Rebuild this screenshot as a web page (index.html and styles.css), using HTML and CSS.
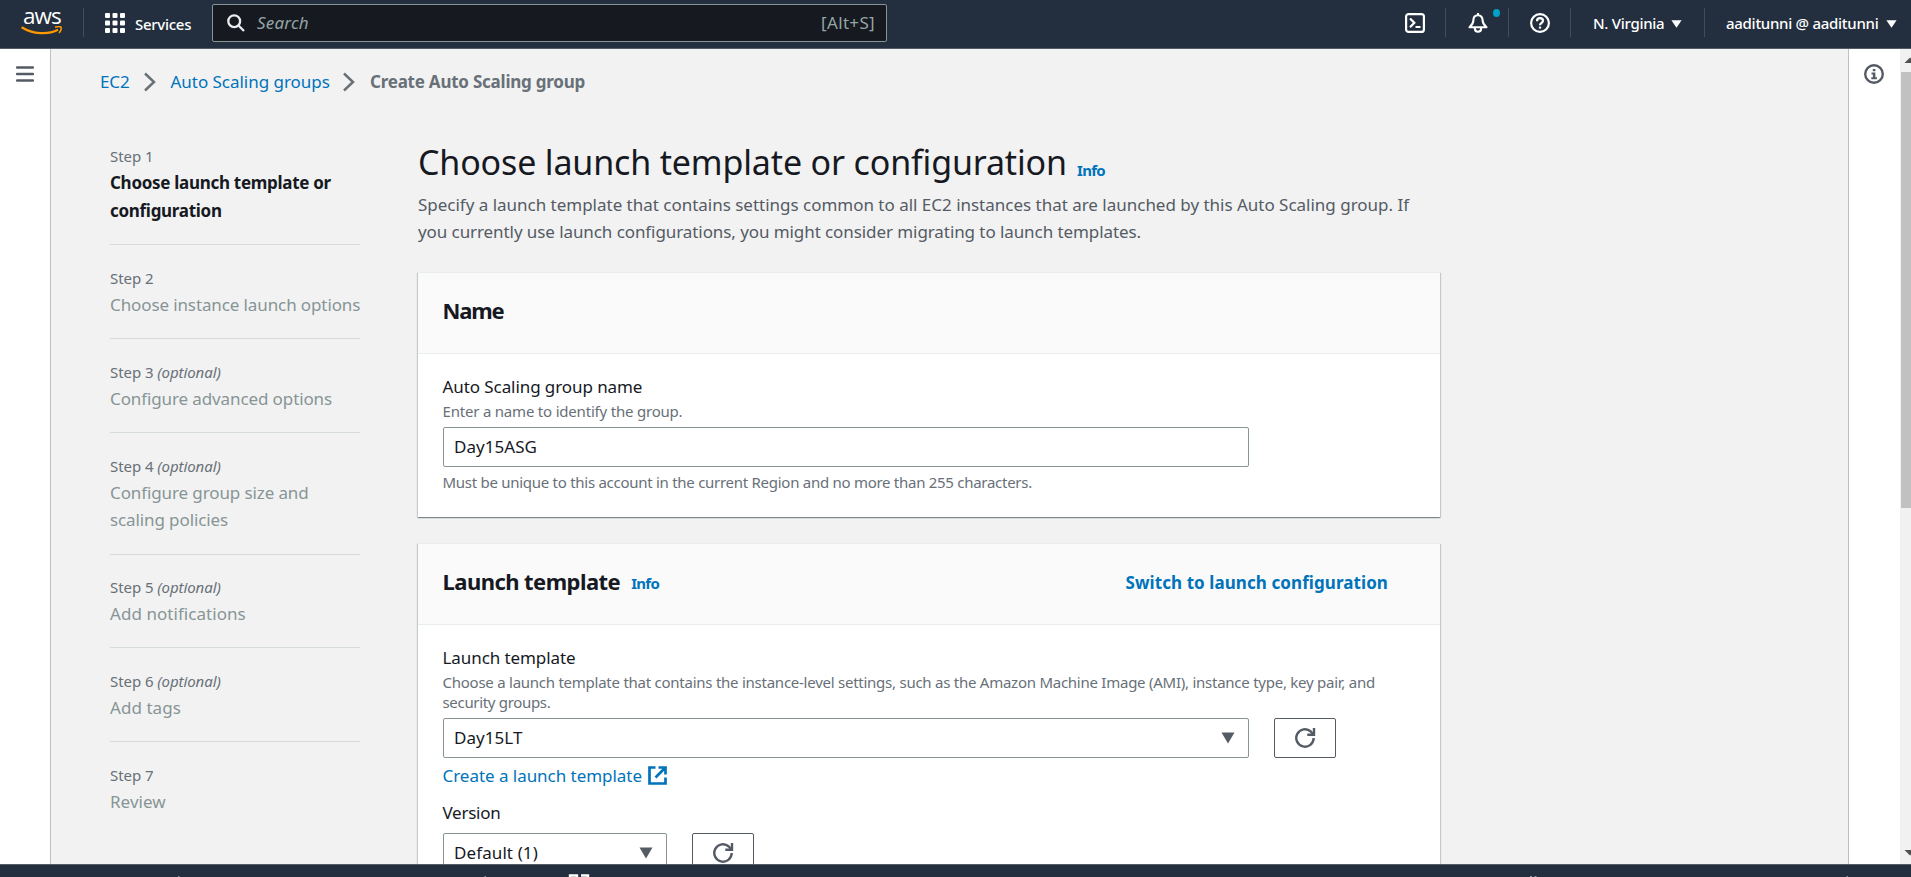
FILE: index.html
```html
<!DOCTYPE html>
<html lang="en">
<head>
<meta charset="utf-8">
<title>Create Auto Scaling group</title>
<link rel="stylesheet" href="styles.css">
</head>
<body>
<div class="app">
  <header class="nav">
    <a class="logo"><span class="logo-text">aws</span>
      <svg class="logo-smile" width="42" height="10" viewBox="0 0 42 10"><path d="M.6 1.2C12 8.300 27 9 37 3.800" fill="none" stroke="#f90" stroke-width="2.300"/><path d="M34 1.300c3-.9 5.500-.7 6 0s.1 3.800-2 5.600" fill="none" stroke="#f90" stroke-width="1.500"/></svg>
    </a>
    <i class="rule rule-logo"></i>
    <div class="services">
      <svg width="20" height="20" viewBox="0 0 20 20" fill="#fff"><rect width="5" height="5" rx="1"/><rect x="7.500" width="5" height="5" rx="1"/><rect x="15" width="5" height="5" rx="1"/><rect y="7.500" width="5" height="5" rx="1"/><rect x="7.500" y="7.500" width="5" height="5" rx="1"/><rect x="15" y="7.500" width="5" height="5" rx="1"/><rect y="15" width="5" height="5" rx="1"/><rect x="7.500" y="15" width="5" height="5" rx="1"/><rect x="15" y="15" width="5" height="5" rx="1"/></svg>
      <span class="nav-text">Services</span>
    </div>
    <div class="search">
      <svg width="18" height="18" viewBox="0 0 18 18" fill="none" stroke="#eaeded" stroke-width="2.300"><circle cx="7.200" cy="7.200" r="5.900"/><path d="M11.500 11.500 17 17"/></svg>
      <span class="search-hint">Search</span>
      <span class="search-key">[Alt+S]</span>
    </div>
    <div class="tools">
      <svg class="tool" width="20" height="20" viewBox="0 0 20 20" fill="none" stroke="#fff" stroke-width="2.200"><rect x="1.100" y="1.100" width="17.800" height="17.800" rx="2.500"/><path d="m5 5.500 4.300 4.300L5 14.200M10.500 14h5"/></svg>
      <i class="rule rule-a"></i>
      <span class="bell">
        <svg width="20" height="20" viewBox="0 0 20 20" fill="none" stroke="#fff" stroke-width="2.100" stroke-linejoin="round"><path d="M10 0v2.500M10 2.300c-3 0-4.600 2.200-4.600 5C5.400 10.500 3.500 12.500 1.500 14.200h17c-2-1.700-3.900-3.700-3.900-6.900 0-2.800-1.600-5-4.600-5z"/><path d="M6.800 14.500v.8c0 2 1.400 3.500 3.200 3.500s3.200-1.500 3.200-3.500v-.8"/></svg>
        <i class="dot"></i>
      </span>
      <i class="rule rule-b"></i>
      <svg class="tool" width="20" height="20" viewBox="0 0 20 20" fill="none" stroke="#fff" stroke-width="2.200"><circle cx="10" cy="10" r="8.900"/><path d="M7 8.200C7 6.200 8.300 5.200 10 5.200s3 1 3 2.600c0 2-3 2-3 4.500"/><path d="M10 13.600v2"/></svg>
      <i class="rule rule-c"></i>
      <span class="nav-text region">N. Virginia</span>
      <svg class="caret-region" width="11" height="8" viewBox="0 0 11 8"><path d="M.4.300h10.200L5.500 7.800z" fill="#fff"/></svg>
      <i class="rule rule-d"></i>
      <span class="nav-text account">aaditunni @ aaditunni</span>
      <svg class="caret-account" width="11" height="8" viewBox="0 0 11 8"><path d="M.4.300h10.200L5.500 7.800z" fill="#fff"/></svg>
    </div>
  </header>

  <div class="body">
    <aside class="rail rail-left">
      <svg width="18" height="16" viewBox="0 0 18 16" fill="none" stroke="#545b64" stroke-width="2.400" stroke-linecap="round"><path d="M1 1.500h16M1 8h16M1 14.500h16"/></svg>
    </aside>

    <div class="page">
      <nav class="crumbs">
        <a class="ec2">EC2</a>
        <svg width="12" height="20" viewBox="0 0 12 20" fill="none" stroke="#687078" stroke-width="2.500"><path d="m1 1.500 9 8.500-9 8.500"/></svg>
        <a class="asg">Auto Scaling groups</a>
        <svg width="12" height="20" viewBox="0 0 12 20" fill="none" stroke="#687078" stroke-width="2.500"><path d="m1 1.500 9 8.500-9 8.500"/></svg>
        <b>Create Auto Scaling group</b>
      </nav>
      <div class="columns">
        <ol class="steps">
          <li class="current"><small>Step 1</small><span>Choose launch template or<br>configuration</span></li>
          <li><small>Step 2</small><span>Choose instance launch options</span></li>
          <li><small>Step 3 <em>(optional)</em></small><span>Configure advanced options</span></li>
          <li><small>Step 4 <em>(optional)</em></small><span>Configure group size and<br>scaling policies</span></li>
          <li><small>Step 5 <em>(optional)</em></small><span class="loose">Add notifications</span></li>
          <li><small>Step 6 <em>(optional)</em></small><span class="loose">Add tags</span></li>
          <li><small>Step 7</small><span class="loose">Review</span></li>
        </ol>
        <main class="main">
          <div class="title"><h1>Choose launch template or configuration</h1><a class="info">Info</a></div>
          <p class="lead">Specify a launch template that contains settings common to all EC2 instances that are launched by this Auto Scaling group. If<br><span class="tight">you currently use launch configurations, you might consider migrating to launch templates.</span></p>

          <section class="card">
            <div class="card-head"><h2 class="name">Name</h2></div>
            <div class="card-body">
              <div class="label">Auto Scaling group name</div>
              <div class="hint enter">Enter a name to identify the group.</div>
              <div class="field wide">Day15ASG</div>
              <div class="hint note">Must be unique to this account in the current Region and no more than 255 characters.</div>
            </div>
          </section>

          <section class="card second">
            <div class="card-head"><h2>Launch template</h2><a class="info">Info</a><a class="switch">Switch to launch configuration</a></div>
            <div class="card-body">
              <div class="label">Launch template</div>
              <div class="hint">Choose a launch template that contains the instance-level settings, such as the Amazon Machine Image (AMI), instance type, key pair, and<br><span class="tighter">security groups.</span></div>
              <div class="row">
                <div class="field wide">Day15LT<svg width="14" height="12" viewBox="0 0 14 12"><path d="M.5.500h13L7 11.500z" fill="#545b64"/></svg></div>
                <div class="button"><svg width="22" height="22" viewBox="0 0 22 22" fill="none" stroke="#545b64" stroke-width="2.400"><path d="M19.700 11a8.700 8.700 0 1 1-2.900-6.500L19 7"/><path d="M20 1v6.800h-6.700"/></svg></div>
              </div>
              <a class="create">Create a launch template<svg width="19" height="19" viewBox="0 0 19 19" fill="none" stroke="#0073bb" stroke-width="2.700"><path d="M7.500 1.500h-6v16h16v-6M10.500 1.500h7v7M17.200 1.800 7.500 11.500"/></svg></a>
              <div class="label version">Version</div>
              <div class="row">
                <div class="field narrow">Default (1)<svg width="14" height="12" viewBox="0 0 14 12"><path d="M.5.500h13L7 11.500z" fill="#545b64"/></svg></div>
                <div class="button"><svg width="22" height="22" viewBox="0 0 22 22" fill="none" stroke="#545b64" stroke-width="2.400"><path d="M19.700 11a8.700 8.700 0 1 1-2.900-6.500L19 7"/><path d="M20 1v6.800h-6.700"/></svg></div>
              </div>
            </div>
          </section>
        </main>
      </div>
    </div>

    <aside class="rail rail-right">
      <svg width="20" height="20" viewBox="0 0 20 20"><circle cx="10" cy="10" r="8.800" fill="none" stroke="#545b64" stroke-width="2.400"/><path d="M8.800 4.900h2.600v2.400H8.800zM7.500 8.600h3.900v4.600h1.500v2H7.300v-2h1.600v-2.700H7.500z" fill="#545b64"/></svg>
    </aside>
    <div class="scroll">
      <svg width="11" height="23" viewBox="0 0 11 23"><path d="m4.500 14 5.500-5.500L15.500 14z" fill="#505050"/></svg>
      <div class="thumb"></div>
      <svg class="down" width="11" height="16" viewBox="0 0 11 16"><path d="m4.500 2 5.500 5.500L15.500 2z" fill="#505050"/></svg>
    </div>
  </div>

  <footer class="foot">
    <svg width="1911" height="12" viewBox="0 0 1911 12"><path d="M570 12V10.500h7V12M581 10.500h7V12" fill="none" stroke="#fff" stroke-width="2.400"/><path d="M178 11h1.500v1H178zM484.500 11h1.500v1h-1.500zM1530 11h2v1h-2zM1534.500 11h2v1h-2zM1846.500 11h1.500v1h-1.500z" fill="#8d959e"/></svg>
  </footer>
</div>
</body>
</html>
```
FILE: styles.css
```css
* { box-sizing: border-box; }
body { margin: 0; font: 17px/27.5px "Noto Sans", sans-serif; color: #16191f; overflow: hidden; }
svg { display: block; flex: none; }
h1, h2, p, ol { margin: 0; padding: 0; font-weight: 400; }
i, b, small, em { flex: none; }
.app { width: 1911px; height: 877px; display: flex; flex-direction: column; overflow: hidden; white-space: nowrap; }

.nav { height: 49px; flex: none; display: flex; align-items: flex-start; background: #232f3e; border-bottom: 1px solid #545b64; }
.logo { margin: 6px 0 0 21px; width: 42px; display: flex; flex-direction: column; }
.logo-text { font: 500 22.500px/20px "Open Sans", sans-serif; letter-spacing: -1px; color: #fff; padding-left: 2px; }
.logo-smile { margin-top: 0; }
.rule { width: 1px; height: 29px; margin-top: 8px; background: #414d5c; flex: none; }
.rule-logo { margin-left: 20px; }
.services { display: flex; align-items: center; height: 46px; margin-left: 21px; }
.nav-text { font-weight: 500; font-size: 15px; letter-spacing: -.28px; color: #fff; line-height: 46px; }
.services .nav-text { margin-left: 10px; padding-top: 1px; width: 77px; }
.search { width: 675px; height: 38px; margin-top: 4px; padding: 0 11px 0 14px; display: flex; align-items: center; background: #16191f; border: 1px solid #879596; border-radius: 2px; color: #95a5a6; }
.search-hint { margin-left: 12px; font-style: italic; letter-spacing: .2px; }
.search-key { margin-left: auto; letter-spacing: .33px; }
.tools { display: flex; margin-left: 518px; }
.tool { margin-top: 13px; }
.rule-a { margin-left: 20px; }
.bell { position: relative; margin: 13px 0 0 22px; }
.dot { position: absolute; left: 25px; top: -4px; width: 7px; height: 8px; border-radius: 50%; background: #00a1c9; }
.rule-b { margin-left: 20px; }
.rule-b + .tool { margin-left: 21px; }
.rule-c { margin-left: 20px; }
.region { margin: 0 0 0 22px; width: 78px; }
.caret-region, .caret-account { margin-top: 20px; }
.rule-d { margin-left: 22px; }
.account { margin: 0 0 0 21px; width: 160px; }

.body { flex: 1; min-height: 0; display: flex; overflow: hidden; background: #f2f2f2; }
.rail { background: #fff; flex: none; }
.rail-left { width: 51px; padding: 17px 0 0 16px; border-right: 1px solid #bcc1c4; }
.rail-right { width: 52px; padding: 15px 0 0 15px; border-left: 1px solid #bcc1c4; }
.page { flex: 1; min-width: 0; padding: 19px 0 0 49px; }
.crumbs { display: flex; align-items: center; color: #687078; height: 28px; }
.crumbs a, .info, .switch, .create { color: #0073bb; }
.ec2 { width: 44px; letter-spacing: -.1px; }
.asg { margin-left: 14.500px; width: 172.500px; letter-spacing: -.03px; }
.crumbs b { margin-left: 15px; letter-spacing: -.23px; }
.columns { display: flex; margin-top: 28px; padding-left: 10px; }

.steps { width: 250px; flex: none; list-style: none; color: #879596; letter-spacing: -.11px; }
.steps li { padding: 20.400px 0 20px; border-bottom: 1px solid #d5dbdb; }
.steps li:last-child { border: 0; }
.steps small, .steps span { display: block; }
.steps small { font-size: 15px; line-height: 25px; letter-spacing: -.07px; color: #687078; }
.steps .loose { letter-spacing: .05px; }
.steps .current span { font-weight: 700; color: #16191f; letter-spacing: -.29px; }

.main { width: 1022px; margin-left: 58px; padding-top: 16px; }
.title { display: flex; align-items: baseline; height: 45px; }
h1 { font-size: 34px; line-height: 45px; letter-spacing: -.16px; width: 659px; }
.info { font-size: 15px; font-weight: 700; letter-spacing: -.69px; }
.title .info { position: relative; top: 1px; }
.lead { color: #545b64; letter-spacing: -.014px; line-height: 27px; margin-top: 6px; }
.tight { letter-spacing: -.08px; }
.card { margin-top: 27px; background: #fff; border-top: 1px solid #eaeded; box-shadow: 0 1px 1px 0 rgba(0,28,36,.3), 1px 1px 1px 0 rgba(0,28,36,.15), -1px 1px 1px 0 rgba(0,28,36,.15); }
.second { margin-top: 26px; }
.card-head { height: 81px; padding: 0 52px 6px 24.500px; display: flex; align-items: center; background: #fafafa; border-bottom: 1px solid #eaeded; }
h2 { font-size: 22px; line-height: 30px; font-weight: 700; letter-spacing: -.55px; }
h2.name { letter-spacing: -1.200px; }
.card-head .info { margin: 6px 0 0 11px; }
.switch { margin-left: auto; font-weight: 700; letter-spacing: .08px; padding-top: 4px; }
.card-body { padding: 19px 25px 20px 24.500px; height: 163px; }
.second .card-body { height: 400px; }
.label { letter-spacing: -.08px; line-height: 27px; }
.hint { margin-top: 1px; font-size: 15px; line-height: 20px; letter-spacing: -.25px; color: #687078; }
.enter { letter-spacing: -.2px; }
.tighter { letter-spacing: -.32px; }
.field { height: 40px; margin-top: 6px; padding: 0 13px 0 10.500px; display: flex; align-items: center; justify-content: space-between; border: 1px solid #879596; border-radius: 2px; background: #fff; letter-spacing: .05px; }
.wide { width: 806px; }
.narrow { width: 224px; letter-spacing: .1px; }
.hint.note { margin-top: 5px; letter-spacing: -.275px; }
.row { display: flex; gap: 25px; }
.button { width: 62px; height: 40px; margin-top: 6px; display: flex; align-items: center; justify-content: center; border: 1px solid #545b64; border-radius: 2px; }
.create { display: flex; align-items: center; gap: 6px; margin-top: 4px; letter-spacing: -.04px; }
.version { margin-top: 9px; letter-spacing: -.25px; }
.version + .row { margin-top: 1px; }

.scroll { width: 11px; background: #f1f1f1; display: flex; flex-direction: column; flex: none; }
.thumb { width: 10px; height: 436px; margin-left: 1px; background: #c1c1c1; }
.down { margin-top: auto; }
.foot { height: 13px; flex: none; background: #232f3e; border-top: 1px solid #545b64; }
```
